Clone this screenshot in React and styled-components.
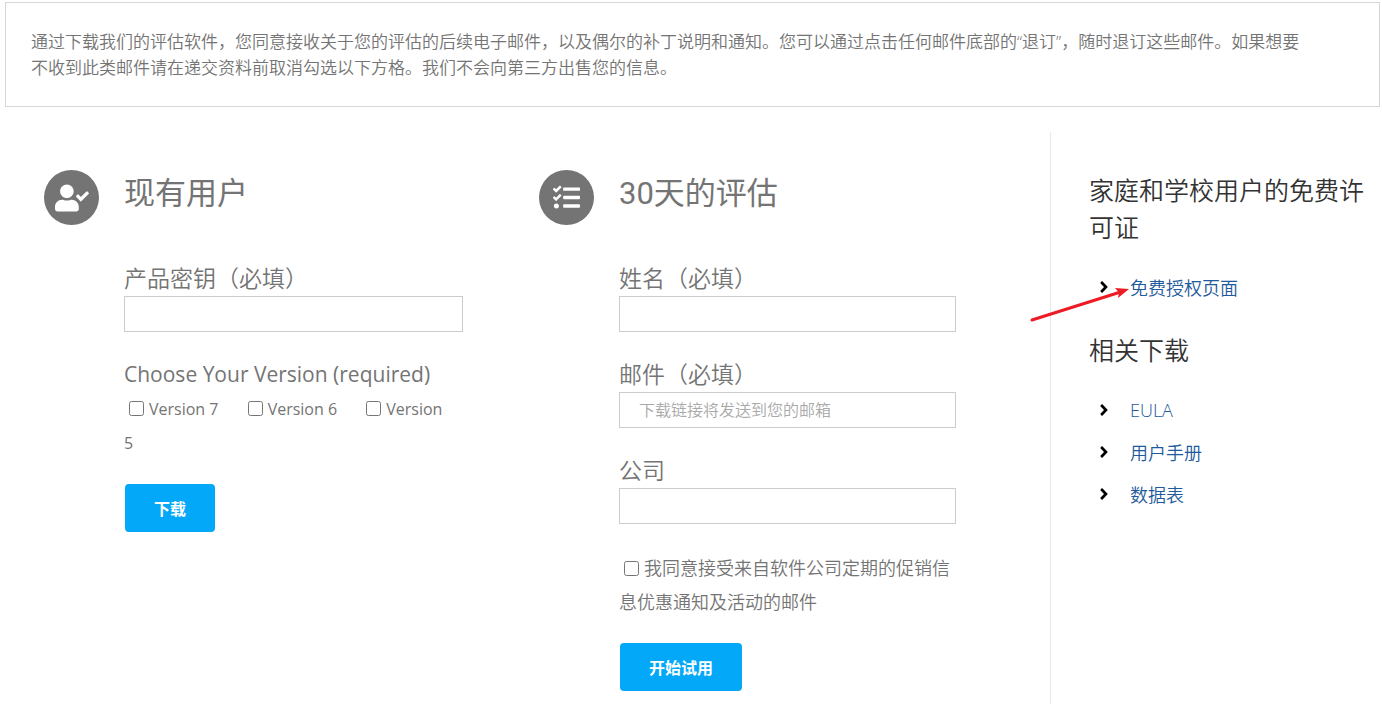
import styled, { createGlobalStyle } from 'styled-components';
import { FaAngleRight, FaTasks, FaUserCheck } from 'react-icons/fa';

const GlobalStyle = createGlobalStyle`
  *, *::before, *::after {
    box-sizing: border-box;
  }

  body {
    margin: 0;
    background-color: #fff;
    color: #747474;
    font-family: 'Open Sans', 'Noto Sans CJK SC', sans-serif;
    font-size: 18px;
    font-weight: 350;
  }
`;

const Page = styled.div`
  padding: 2px 2px 0 5px;
`;

const Notice = styled.p`
  margin: 0 0 25px 0;
  padding: 26px 25px 25px 25px;
  border: 1px solid #d6d6d6;
  font-size: 17px;
  line-height: 26px;
`;

const Content = styled.main`
  display: grid;
  grid-template-columns: 36fr 40fr 24fr;
`;

const Section = styled.section`
  display: grid;
  grid-template-columns: 55px 1fr;
  column-gap: 25px;
  align-items: start;
  padding: 38px ${(props) => (props.$wide ? '94px' : '37px')} 13px 39px;
`;

const IconCircle = styled.div`
  display: flex;
  align-items: center;
  justify-content: center;
  width: 55px;
  height: 55px;
  border-radius: 50%;
  background-color: #747474;
  color: #fff;
  font-size: 27px;
`;

const SectionTitle = styled.h2`
  margin: 0 0 42px 0;
  font-family: Roboto, 'Noto Sans CJK SC', sans-serif;
  font-size: 31px;
  font-weight: 400;
  line-height: 48px;
`;

const Field = styled.div`
  margin-bottom: 24px;
`;

const Label = styled.label`
  display: block;
  font-size: 23px;
  line-height: 36px;
`;

const TextInput = styled.input`
  display: block;
  width: 100%;
  height: 36px;
  padding: 0 19px;
  border: 1px solid #ccc;
  border-radius: 0;
  background-color: #fff;
  color: #747474;
  font-family: inherit;
  font-size: 16px;
  font-weight: 350;

  &::placeholder {
    color: #a9a9a9;
    opacity: 1;
  }
`;

const Versions = styled.fieldset`
  min-width: 0;
  margin: 0 0 24px 0;
  padding: 0;
  border: none;
  font-weight: 400;
`;

const Legend = styled.legend`
  padding: 0;
  font-size: 21px;
  line-height: 36px;
`;

const CheckLabel = styled.label`
  margin-right: ${(props) => (props.$inline ? '20px' : '0')};
  font-size: ${(props) => (props.$inline ? '16px' : '18px')};
  line-height: 34px;
`;

const Checkbox = styled.input`
  width: 15px;
  height: 15px;
  margin: 3px 5px;
  vertical-align: -1px;
`;

const Consent = styled.div`
  margin: 27px 0 24px 0;
`;

const SubmitButton = styled.button`
  height: 48px;
  margin-left: 1px;
  padding: 0 29px;
  border: none;
  border-radius: 4px;
  background-color: #03a9f8;
  color: #fff;
  font-family: inherit;
  font-size: 16px;
  font-weight: 700;
  cursor: pointer;
`;

const Sidebar = styled.aside`
  padding: 40px 10px 0 38px;
  border-left: 1px solid #e8e8e8;
`;

const SidebarTitle = styled.h3`
  margin: 0 0 20px 0;
  color: #333;
  font-size: 25px;
  font-weight: 350;
  line-height: 37px;
`;

const LinkList = styled.ul`
  margin: 0 0 24px 0;
  padding: 0;
  list-style: none;
`;

const LinkItem = styled.li`
  display: flex;
  align-items: center;
  position: relative;
  height: 42px;
  padding-left: 9px;
`;

const Chevron = styled(FaAngleRight)`
  width: 12px;
  height: 18px;
  margin-right: 20px;
  color: #000;
`;

const SidebarLink = styled.a`
  color: #1e5a9c;
  text-decoration: none;
`;

const PointerArrow = styled.svg`
  position: absolute;
  top: 18px;
  left: -60px;
  pointer-events: none;
`;

const versions = ['Version 7', 'Version 6', 'Version 5'];
const downloads = ['EULA', '用户手册', '数据表'];

function ExistingUser() {
  return (
    <Section>
      <IconCircle>
        <FaUserCheck size={34} />
      </IconCircle>
      <form>
        <SectionTitle>现有用户</SectionTitle>
        <Field>
          <Label htmlFor='product-key'>产品密钥（必填）</Label>
          <TextInput id='product-key' type='text' />
        </Field>
        <Versions>
          <Legend>Choose Your Version (required)</Legend>
          {versions.map((version) => (
            <CheckLabel key={version} $inline>
              <Checkbox type='checkbox' name='version' value={version} />
              {version}{' '}
            </CheckLabel>
          ))}
        </Versions>
        <SubmitButton type='button'>下载</SubmitButton>
      </form>
    </Section>
  );
}

function Evaluation() {
  return (
    <Section $wide>
      <IconCircle>
        <FaTasks />
      </IconCircle>
      <form>
        <SectionTitle>30天的评估</SectionTitle>
        <Field>
          <Label htmlFor='name'>姓名（必填）</Label>
          <TextInput id='name' type='text' />
        </Field>
        <Field>
          <Label htmlFor='email'>邮件（必填）</Label>
          <TextInput
            id='email'
            type='email'
            placeholder='下载链接将发送到您的邮箱'
          />
        </Field>
        <Field>
          <Label htmlFor='company'>公司</Label>
          <TextInput id='company' type='text' />
        </Field>
        <Consent>
          <CheckLabel>
            <Checkbox type='checkbox' name='consent' />
            我同意接受来自软件公司定期的促销信息优惠通知及活动的邮件
          </CheckLabel>
        </Consent>
        <SubmitButton type='button'>开始试用</SubmitButton>
      </form>
    </Section>
  );
}

function App() {
  return (
    <>
      <GlobalStyle />
      <Page>
        <Notice>
          通过下载我们的评估软件，您同意接收关于您的评估的后续电子邮件，以及偶尔的补丁说明和通知。您可以通过点击任何邮件底部的“退订”，随时退订这些邮件。如果想要
          <br />
          不收到此类邮件请在递交资料前取消勾选以下方格。我们不会向第三方出售您的信息。
        </Notice>
        <Content>
          <ExistingUser />
          <Evaluation />
          <Sidebar>
            <SidebarTitle>家庭和学校用户的免费许可证</SidebarTitle>
            <LinkList>
              <LinkItem>
                <Chevron />
                <SidebarLink href='#free-license'>免费授权页面</SidebarLink>
                <PointerArrow width='102' height='40' viewBox='0 0 102 40'>
                  <path
                    d='M3 36 L90 8.5'
                    stroke='#ed1c24'
                    strokeWidth='3'
                    strokeLinecap='round'
                  />
                  <path d='M100 5 L86 4 L90 8.5 L89 14 Z' fill='#ed1c24' />
                </PointerArrow>
              </LinkItem>
            </LinkList>
            <SidebarTitle>相关下载</SidebarTitle>
            <LinkList>
              {downloads.map((item) => (
                <LinkItem key={item}>
                  <Chevron />
                  <SidebarLink href='#downloads'>{item}</SidebarLink>
                </LinkItem>
              ))}
            </LinkList>
          </Sidebar>
        </Content>
      </Page>
    </>
  );
}

export default App;
